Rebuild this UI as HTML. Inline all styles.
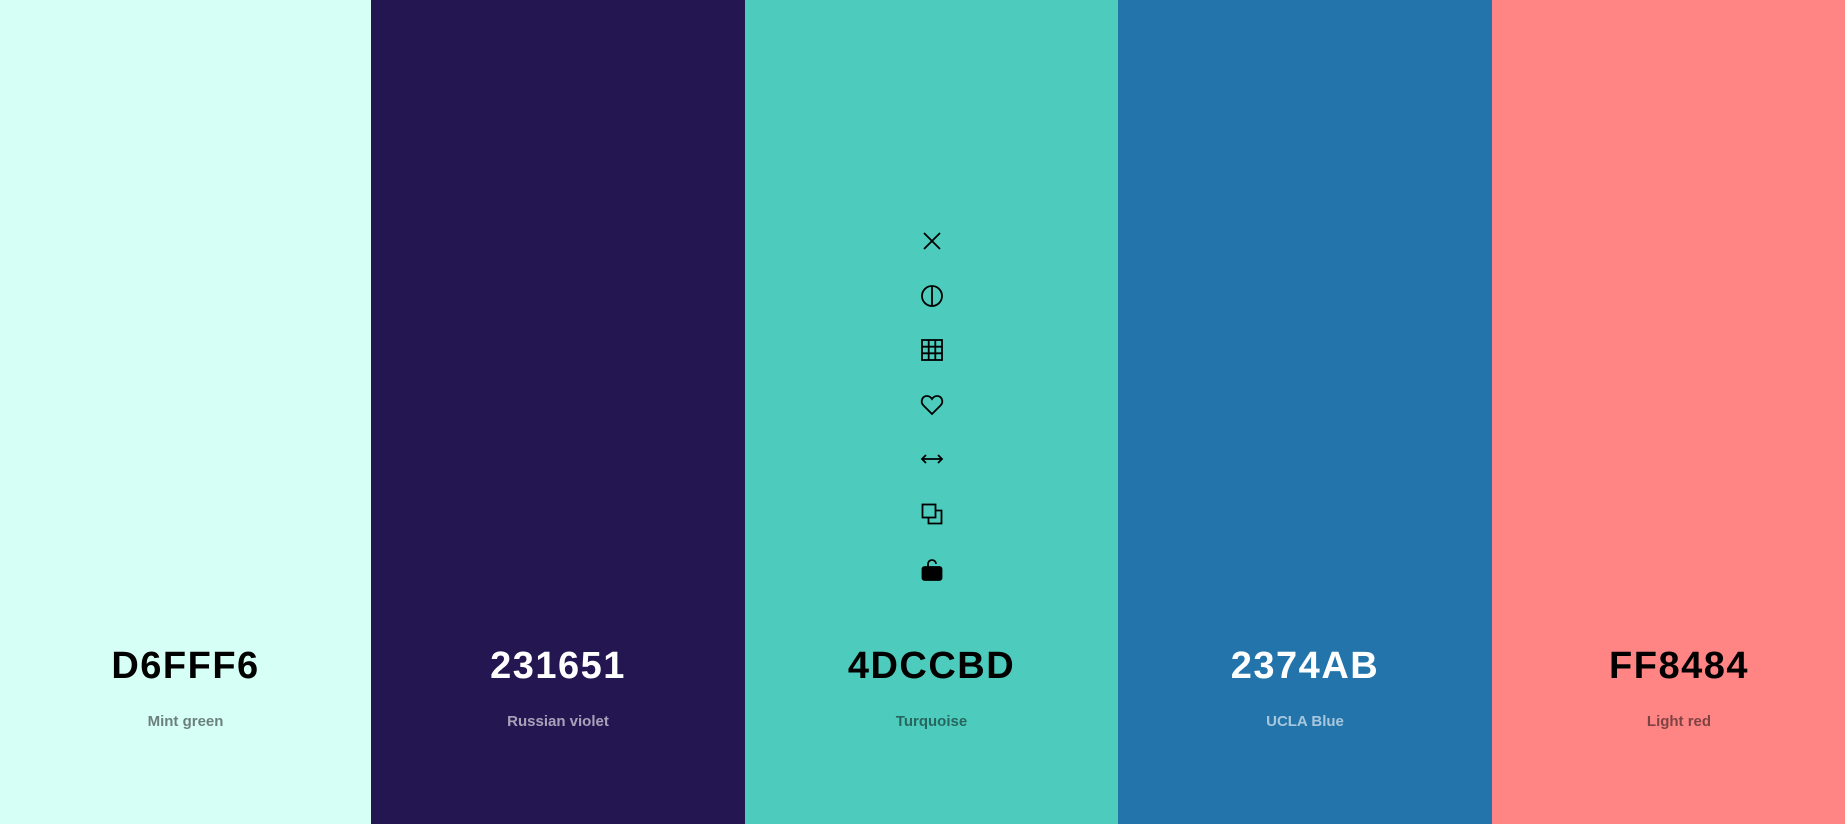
<!DOCTYPE html>
<html><head><meta charset="utf-8"><style>
body{margin:0;width:1845px;height:824px;display:flex;font-family:"Liberation Sans",sans-serif;overflow:hidden}
.c{position:relative;height:824px;flex:none}
.h{position:absolute;top:641px;width:100%;text-align:center;font-size:38px;font-weight:bold;letter-spacing:1.5px;line-height:50px}
.n{position:absolute;top:712px;width:100%;text-align:center;font-size:15px;font-weight:bold;line-height:20px}
.d .h{color:#000}.d .n{color:rgba(0,0,0,.5)}
.l .h{color:#fff}.l .n{color:rgba(255,255,255,.6)}
</style></head><body>
<div class="c d" style="background:#D6FFF6;width:371px"><div class="h">D6FFF6</div><div class="n">Mint green</div></div>
<div class="c l" style="background:#231651;width:374px"><div class="h">231651</div><div class="n">Russian violet</div></div>
<div class="c d" style="background:#4DCCBD;width:373px"><div class="h">4DCCBD</div><div class="n">Turquoise</div></div>
<div class="c l" style="background:#2374AB;width:374px"><div class="h">2374AB</div><div class="n">UCLA Blue</div></div>
<div class="c d" style="background:#FF8484;width:374px"><div class="h">FF8484</div><div class="n">Light red</div></div>
<svg style="position:absolute;left:0;top:0" width="1845" height="824" fill="none" stroke="#000" stroke-width="1.8">
<g transform="translate(932,241)"><path d="M-8,-8L8,8M8,-8L-8,8"/></g>
<g transform="translate(932,296)"><circle r="10"/><path d="M0,-10V10"/></g>
<g transform="translate(932,350)"><rect x="-10" y="-10" width="20" height="20"/><path d="M-3.3,-10V10M3.3,-10V10M-10,-3.3H10M-10,3.3H10"/></g>
<g transform="translate(932,405)"><path d="M0,9L-8.5,0.5C-12,-3,-10,-9,-5,-9C-2.5,-9,-1,-7.5,0,-6C1,-7.5,2.5,-9,5,-9C10,-9,12,-3,8.5,0.5Z"/></g>
<g transform="translate(932,459)"><path d="M-10,0H10M-6,-4L-10,0L-6,4M6,-4L10,0L6,4"/></g>
<g transform="translate(932,514)"><rect x="-9.5" y="-9.5" width="13" height="13"/><path d="M3.5,-3.5H9.5V9.5H-3.5V3.5"/></g>
<g transform="translate(932,570)"><path d="M-4,-3V-6A4,4 0 0 1 4,-6"/><rect x="-9.5" y="-3" width="19" height="13" rx="2" fill="#000"/></g>
</svg>
</body></html>
